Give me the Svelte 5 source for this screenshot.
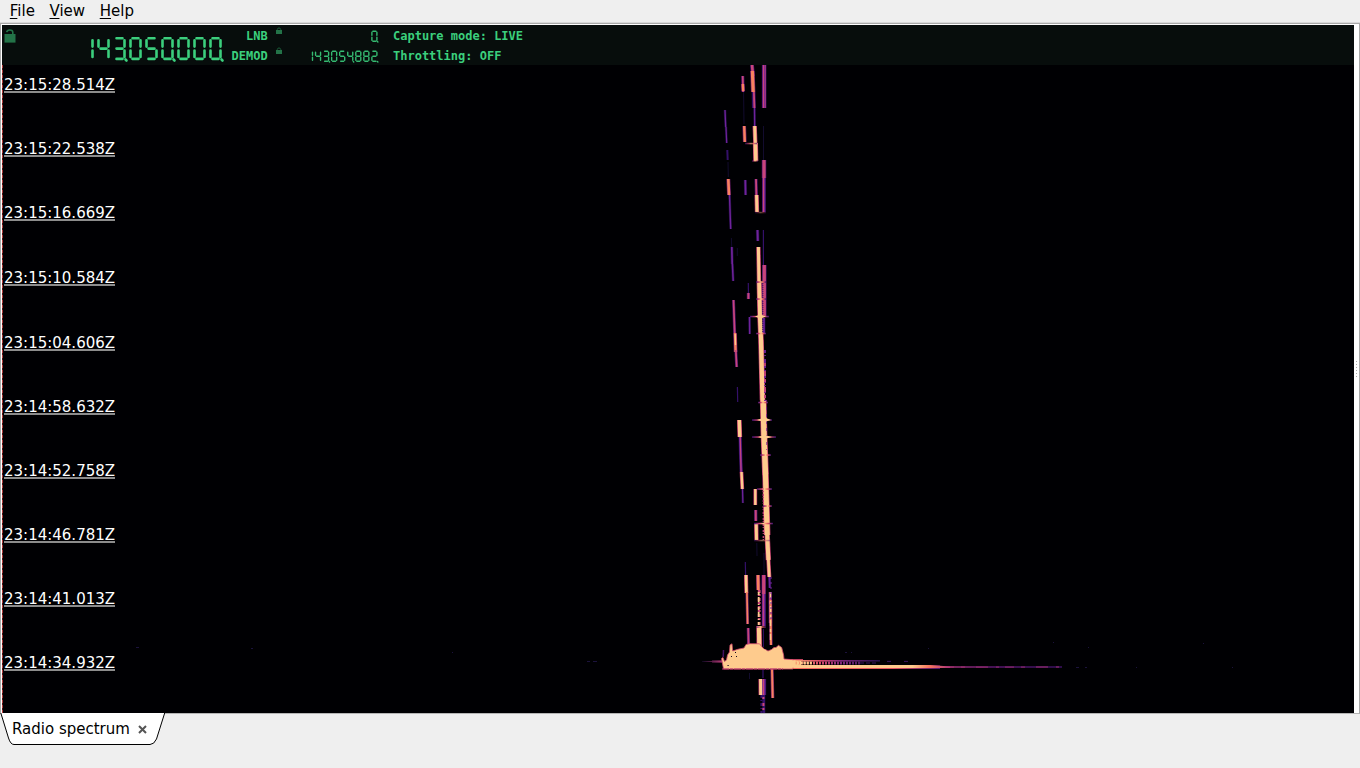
<script>
  const menus = ['File', 'View', 'Help'];

  // label and distance to the next one
  const timestamps = [
    ['23:15:28.514Z', 64],
    ['23:15:22.538Z', 64],
    ['23:15:16.669Z', 65],
    ['23:15:10.584Z', 65],
    ['23:15:04.606Z', 64],
    ['23:14:58.632Z', 64],
    ['23:14:52.758Z', 64],
    ['23:14:46.781Z', 64],
    ['23:14:41.013Z', 64],
    ['23:14:34.932Z', 64]
  ];

  // lit segments for each digit
  const segments = {
    0: 'abcdef',
    1: 'bc',
    2: 'abged',
    3: 'abgcd',
    4: 'fgbc',
    5: 'afgcd',
    6: 'afgecd',
    7: 'abc',
    8: 'abcdefg',
    9: 'abcdfg'
  };

  function lcdPath(value, pitch, w, h, gap) {
    let d = '';
    [...value].forEach((digit, i) => {
      const x = i * pitch + 1.5;
      const r = x + w;
      const y = 1.3;
      const m = y + h / 2;
      const b = y + h;
      const lines = {
        a: `M${x + gap} ${y}H${r - gap}`,
        b: `M${r} ${y + gap}V${m - gap}`,
        c: `M${r} ${m + gap}V${b - gap}`,
        d: `M${x + gap} ${b}H${r - gap}`,
        e: `M${x} ${m + gap}V${b - gap}`,
        f: `M${x} ${y + gap}V${m - gap}`,
        g: `M${x + gap} ${m}H${r - gap}`
      };
      for (const s of segments[digit]) d += lines[s];
      // thousands mark
      if ((value.length - 1 - i) % 3 === 0) d += `M${r + gap * 0.5} ${b + gap * 0.3}l${gap * 0.5} ${gap * 0.5}`;
    });
    return d;
  }

  // x1, y1, x2, y2, width, level
  const traces = [
    // leftmost echo
    [725, 110, 725.7, 127, 1.3, 2],
    [726, 127, 726.7, 143, 1.2, 2],
    [727.3, 150, 727.7, 160, 2, 1],
    [728, 162, 728.3, 177, 1, 0],
    [728.3, 179, 729, 195, 2.6, 4],
    [729.5, 195, 730.7, 229, 1.4, 2],
    [731.4, 238, 731.7, 247, 1, 0],
    [731.8, 247, 732.2, 264, 1.7, 2],
    [732.4, 264, 733.2, 281, 1.5, 2],
    [733.5, 300, 734.7, 333, 1.7, 3],
    [735, 333, 735.6, 352, 2.4, 4],
    [735.2, 334, 735.5, 345, 1.2, 5],
    [735.8, 350, 736.7, 367, 1.7, 3],
    [737.4, 387, 737.7, 402, 1.2, 1],
    [739.3, 420, 739.8, 437, 3.4, 5],
    [740, 437, 741.3, 472, 2.2, 2],
    [740.3, 437, 741, 472, 1, 3],
    [741.5, 472, 742.3, 489, 2.4, 5],
    [742.5, 489, 742.9, 503, 1.2, 2],
    [745.3, 562, 745.6, 575, 1.2, 1],
    [746, 575, 746.4, 593, 2.7, 5],
    [746.9, 592, 747.6, 624, 1.7, 4],
    [748.2, 628, 748.6, 645, 1.8, 3],
    // second echo
    [742.7, 76, 743.1, 92, 1.8, 3],
    [742.8, 84, 743.2, 91, 2.4, 4],
    [743.6, 92, 744, 124, 1, 0],
    [744.2, 126, 744.8, 142, 2.4, 4],
    [745.3, 180, 745.6, 195, 1.8, 2],
    [748.3, 283, 748.5, 299, 1.2, 1],
    [748.4, 293, 748.4, 299, 2, 3],
    [749.5, 317, 749.7, 334, 1.4, 2],
    [737.3, 248, 737.3, 256, 1, 0],
    // main carrier
    [752, 65, 753, 76, 2.6, 3],
    [752.4, 71, 753.2, 92, 3.2, 4],
    [753.8, 92, 754.3, 108, 2, 3],
    [752.4, 92, 752.6, 108, 1.3, 1],
    [754.5, 108, 754.7, 126, 1.3, 2],
    [754.7, 126, 755.3, 143, 3, 5],
    [755.4, 143, 755.8, 161, 3.8, 5],
    [756, 179, 756.4, 195, 1.8, 3],
    [756.6, 195, 757, 212, 3, 5],
    [757.5, 230, 757.8, 241, 2, 2],
    [758.4, 247, 759, 283, 3, 5],
    [759.2, 283, 760, 316, 3.9, 5],
    [760, 316, 761, 340, 4.2, 5],
    [761, 340, 762.5, 400, 4.3, 5],
    [763.2, 400, 764, 435, 5.4, 5],
    [764, 435, 765.5, 475, 5.4, 5],
    [765.5, 475, 767.2, 535, 5.2, 5],
    [767.2, 535, 768.4, 560, 4, 5],
    [768.4, 560, 769.3, 577, 2.8, 5],
    [769.4, 577, 769.8, 588, 1.7, 2],
    [770.2, 592, 770.4, 623, 2.2, 3],
    [770.5, 600, 771, 645, 2, 4],
    // fixed line
    [764, 65, 764, 108, 3.2, 2],
    [763.5, 65, 763.5, 108, 1.2, 3],
    [765.3, 65, 765.3, 108, 0.7, 3],
    [763.5, 126, 763.5, 160, 1, 0],
    [764, 160, 764, 178, 3.2, 3],
    [764, 178, 764, 212, 2.8, 2],
    [763.5, 178, 763.5, 212, 1.2, 3],
    [763.4, 230, 763.4, 265, 1.2, 1],
    [764.3, 265, 764.3, 282, 3.2, 3],
    [764.2, 282, 764.2, 316, 3.4, 3],
    [763.8, 318, 763.8, 334, 2, 2],
    // central lower echoes
    [755.3, 489, 755.3, 505, 2.4, 5],
    [755.7, 510, 755.8, 521, 2, 3],
    [756.2, 523, 756.5, 540, 3, 5],
    [756.8, 543, 757, 556, 1, 0],
    [764, 553, 764, 575, 1, 0],
    [758, 575, 758.3, 590, 2.8, 4],
    [763.7, 575, 763.7, 594, 3.2, 3],
    [763.8, 594, 763.8, 626, 3.2, 2],
    [763.3, 594, 763.3, 626, 1.2, 3],
    [759, 626, 759.3, 648, 4.2, 5],
    [763.4, 629, 763.4, 647, 1, 1],
    // below the burst
    [760.8, 679, 760.9, 695, 3.4, 5],
    [764, 679, 764, 695, 3.2, 2],
    [763.5, 679, 763.5, 699, 1.2, 3],
    [763.8, 695, 763.8, 713, 2.8, 1],
    [772, 668, 772.7, 698, 2, 4],
    [763, 670, 763, 678, 1.2, 1],
    [749.5, 673, 749.5, 679, 1, 0]
  ];

  // uneven, noisy edges
  const dotted = [
    [765, 350, 765, 402, 1.8, 2, '3 2 1 3 4 2'],
    [765, 363, 765, 400, 1.8, 3, '3 5 5 3'],
    [762.8, 283, 762.8, 334, 1, 1, '1 1'],
    [763.3, 488, 763.3, 540, 1.3, 3, '2 1 1 2'],
    [759.2, 590, 759.2, 626, 2.8, 3, '3 1 2 2'],
    [758.7, 592, 758.7, 626, 1.8, 5, '3 2 5 2 1 2'],
    [770.5, 592, 770.5, 643, 1.4, 5, '6 3 3 2'],
    [771, 577, 771, 620, 1, 2, '2 3'],
    [761.4, 695, 761.4, 713, 2, 1, '3 2 1 2'],
    [763.4, 697, 763.4, 713, 2, 3, '2 4 3 2'],
    [766.6, 400, 766.6, 450, 0.7, 2, '3 4']
  ];

  // x1, x2, y, brightness of the sideband splashes
  const splashes = [
    [745, 757, 143.5, 0.7],
    [752, 758, 161, 0.6],
    [755, 766, 212.5, 0.4],
    [756, 766, 282, 1],
    [756, 766, 299, 1],
    [750, 769, 316.5, 1],
    [756, 766, 333.5, 1],
    [758, 768, 402.5, 1],
    [752, 772, 420, 1],
    [752, 776, 437, 1],
    [760, 771, 455, 1],
    [757, 772, 489, 1],
    [763, 772, 506, 1],
    [754, 773, 523.5, 1],
    [754, 770, 540.5, 0.5],
    [756, 766, 627, 0.8]
  ];

  const palette = ['#120b2e', '#34106a', '#70229a', '#c9457a', '#f9815f', '#fecb8d'];
  const halo = ['none', 'none', '#1c0c3b', '#47136d', '#6f1e6b', '#c43a70'];
</script>

<div class="window">
  <nav class="menubar">
    {#each menus as menu}
      <span class="menu"><u>{menu[0]}</u>{menu.slice(1)}</span>
    {/each}
  </nav>

  <div class="frame">
    <div class="panel">
      <header class="lcd">
        <div class="lock-main">
          <svg width="12" height="14" viewBox="0 0 12 14">
            <path d="M2.7 3.2C3 .4 8.8 .2 8.8 3.2V6" fill="none" stroke="#237348" stroke-width="1.6" />
            <rect x="0.5" y="5" width="11" height="8.6" fill="#237348" />
          </svg>
        </div>
        <svg class="freq" width="142" height="26" viewBox="0 0 142 26" role="img" aria-label="143.050.000">
          <path d={lcdPath('143050000', 16, 10, 20.6, 2)} />
        </svg>
        <div class="names">
          <span>LNB</span>
          <span>DEMOD</span>
        </div>
        <div class="locks">
          {#each [0, 1] as lock}
            <svg width="6" height="8" viewBox="0 0 6 8">
              <path d="M1.3 4V2.4C1.3 .5 4.7 .5 4.7 2.4V4" fill="none" stroke="#1b5a38" />
              <rect y="3" width="6" height="4" fill="#237348" />
            </svg>
          {/each}
        </div>
        <div class="values">
          <svg class="small" width="75" height="14" viewBox="0 0 75 14" role="img" aria-label="0">
            <path transform="translate(64.4 0)" d={lcdPath('0', 8.05, 5, 10, 1)} />
          </svg>
          <svg class="small" width="75" height="14" viewBox="0 0 75 14" role="img" aria-label="143.054.882">
            <path d={lcdPath('143054882', 8.05, 5, 10, 1)} />
          </svg>
        </div>
        <div class="status">
          <span>Capture mode: LIVE</span>
          <span>Throttling: OFF</span>
        </div>
      </header>

      <div class="waterfall">
        <svg class="spectrum" width="1352" height="648" viewBox="2 65 1352 648">
          <defs>
            <linearGradient id="beam" gradientUnits="userSpaceOnUse" x1="783" x2="1064" y1="0" y2="0">
              <stop offset="0" stop-color="#fecb8d" />
              <stop offset=".46" stop-color="#fecb8d" />
              <stop offset=".52" stop-color="#f8765f" />
              <stop offset=".6" stop-color="#a5327c" />
              <stop offset=".75" stop-color="#5a176f" />
              <stop offset="1" stop-color="#3a1160" />
            </linearGradient>
            <linearGradient id="edge" gradientUnits="userSpaceOnUse" x1="783" x2="940" y1="0" y2="0">
              <stop offset="0" stop-color="#f56b60" />
              <stop offset=".7" stop-color="#e4525f" />
              <stop offset="1" stop-color="#51176d" />
            </linearGradient>
            <linearGradient id="upper" gradientUnits="userSpaceOnUse" x1="783" x2="880" y1="0" y2="0">
              <stop offset="0" stop-color="#fecb8d" />
              <stop offset=".13" stop-color="#fba373" />
              <stop offset=".38" stop-color="#d84968" />
              <stop offset=".6" stop-color="#7d267b" />
              <stop offset="1" stop-color="#240e48" />
            </linearGradient>
            <linearGradient id="tail" gradientUnits="userSpaceOnUse" x1="702" x2="723" y1="0" y2="0">
              <stop offset="0" stop-color="#0d0820" />
              <stop offset="1" stop-color="#b73779" />
            </linearGradient>
            <linearGradient id="splash">
              <stop offset="0" stop-color="#3b0f70" />
              <stop offset=".3" stop-color="#d8456c" />
              <stop offset=".5" stop-color="#fecb8d" />
              <stop offset=".7" stop-color="#ed5d62" />
              <stop offset="1" stop-color="#3b0f70" />
            </linearGradient>
          </defs>

          {#each traces as [x1, y1, x2, y2, width, level]}
            <line {x1} {y1} {x2} {y2} stroke={halo[level]} stroke-width={width + 1.3} />
          {/each}
          {#each traces as [x1, y1, x2, y2, width, level]}
            <line {x1} {y1} {x2} {y2} stroke={palette[level]} stroke-width={width} />
          {/each}
          {#each dotted as [x1, y1, x2, y2, width, level, dash]}
            <line {x1} {y1} {x2} {y2} stroke={palette[level]} stroke-width={width} stroke-dasharray={dash} />
          {/each}
          {#each splashes as [x1, x2, y, opacity]}
            <rect x={x1} y={y - 0.7} width={x2 - x1} height="1.5" fill="url(#splash)" {opacity} />
          {/each}
          <path d="M757 420l6-2h3l5 2-5 1.6h-3zM758 437l5-1.6h3l6 1.6-6 1.6h-3zM755 316.5l4-1.5h3l4 1.5-4 1.5h-3z" fill="#fecb8d" />

          <!-- meteor head echo -->
          <rect x="702" y="661" width="21" height="1" fill="url(#tail)" />
          <rect x="712" y="660" width="10" height="3" fill="url(#tail)" opacity=".6" />
          <path d="M783 659.6h20" stroke="#d64a68" />
          <rect x="783" y="660" width="97" height="1.6" fill="url(#upper)" />
          <rect x="783" y="661" width="18" height="5" fill="#fecb8d" />
          <path d="M795 663H860" stroke="url(#upper)" stroke-width="3" stroke-dasharray="2 1" />
          <path d="M797 663H812" stroke="#fecb8d" stroke-width="2.4" stroke-dasharray="2 1.2" />
          <path d="M860 663H878M887 661.4h5M904 661.4h6" stroke="#3a1460" stroke-dasharray="4 2" />
          <path d="M783 667.2H940" stroke="url(#edge)" stroke-width="3.8" />
          <path d="M783 665H930L950 666.5V668H783Z" fill="url(#beam)" />
          <path d="M925 666.3H1062V667.7H925Z" fill="url(#beam)" />
          <path d="M945 667.1L1062 667" stroke="#b73779" stroke-opacity=".4" stroke-width="1.8" stroke-dasharray="9 7 4 11 12 8 3 6" />
          <path d="M1076 667.5h3M1085 667.5h2M1136 667.5h1M1232 667.5h1M1053 642.5h1M1088 647.5h1M928 648.5h1M136 647.5h3M251 648.5h2M587 661.5h3M593 661.5h4M845 652.5h2M851 652.5h1M452 652.5h1M1203 643.5h1" stroke="#1b123c" />
          <path
            d="M721.5 658.5L723 657.5 724.5 661.5 726.5 660 727.5 655 729.5 652 730 645 732 643.8 732.7 651 737 649.5 739 649 744 648 746 644.5 750 643.7 759.5 643.8 763 648 768 651 771.5 649.5 774 647.5 776 647.5 778.5 645.3 781.7 647.5 783.6 655 784 659 793 659.7 793 669 723.5 669Z"
            fill="#fecb8d"
            stroke="#d14a6b"
            stroke-width=".8"
          />
          <rect x="782.5" y="660.3" width="13" height="7.4" fill="#fecb8d" />
          <path d="M722 669H783" stroke="#bd3b70" stroke-dasharray="7 1 3 1" />
          <path d="M723.5 650l-.3 7" stroke="#411160" stroke-width="1.5" />
          <path d="M731 656.5h1M736 656.5h1M735 652.5h1M727.5 665.5h1.2M764 648.5h1" stroke="#12071f" />
        </svg>

        <div class="cursor"></div>
        <div class="times">
          {#each timestamps as [time, step]}
            <div class="row" style="height: {step}px"><span>{time}</span></div>
          {/each}
        </div>
      </div>
    </div>

    <div class="splitter">
      {#each Array(6) as _}
        <i></i>
      {/each}
    </div>
  </div>

  <footer class="tabs">
    <div class="tab">
      <svg class="tab-shape" width="166" height="32" viewBox="0 0 166 32">
        <path d="M.5 -1L8.5 25Q10.5 31.5 14 31.5H150Q154 31.5 156.5 26L165 -1" fill="#fff" stroke="#000" />
      </svg>
      <span>Radio spectrum</span>
      <svg class="close" width="9" height="9" viewBox="0 0 9 9">
        <path d="M1 1L8 8M8 1L1 8" stroke="#555" stroke-width="2" />
      </svg>
    </div>
  </footer>
</div>

<style>
  :global(body) {
    background: #efefef;
    overflow: hidden;
  }

  .window {
    display: flex;
    flex-direction: column;
    width: 1360px;
    height: 768px;
    background: #efefef;
    color: #000;
    font-family: 'DejaVu Sans', sans-serif;
    font-size: 15px;
  }

  .menubar {
    display: flex;
    gap: 14.6px;
    height: 22px;
    padding-left: 9.8px;
    line-height: 22px;
    border-bottom: 1px solid #d9d9d9;
  }

  .menu u {
    text-underline-offset: 2px;
    text-decoration-thickness: 1px;
  }

  .frame {
    display: flex;
    box-sizing: border-box;
    height: 691px;
    border: 1px solid #a9a9a9;
    border-bottom-color: #b5b5b5;
    background: #fff;
  }

  .panel {
    width: 1352px;
    margin: 1px 0 0 1px;
  }

  .lcd {
    display: flex;
    height: 40px;
    background: #070d0c;
    color: #3bcf7d;
    font: bold 12px 'DejaVu Sans Mono', monospace;
  }

  .lock-main {
    width: 80px;
    padding: 4px 0 0 2px;
  }

  .freq {
    width: 142px;
    padding-top: 12px;
    flex: none;
    overflow: visible;
    fill: none;
    stroke: #3bcf7d;
    stroke-width: 2.6;
    stroke-linecap: round;
    margin-left: -3px;
  }

  .names,
  .status {
    display: flex;
    flex-direction: column;
    line-height: 20px;
    padding-top: 1px;
  }

  .names {
    width: 44.7px;
    text-align: right;
  }

  .locks {
    display: flex;
    flex-direction: column;
    gap: 12px;
    padding: 2px 0 0 8px;
    width: 30.3px;
  }

  .values {
    display: flex;
    flex-direction: column;
    gap: 6px;
    width: 87px;
    padding-top: 5px;
  }

  .small {
    overflow: visible;
    fill: none;
    stroke: #35ba71;
    stroke-width: 1.4;
    stroke-linecap: round;
  }

  .waterfall {
    position: relative;
    height: 648px;
    background: #000003;
    overflow: hidden;
  }

  .spectrum {
    display: block;
  }

  .cursor {
    position: absolute;
    inset: 0 auto 0 0;
    width: 1px;
    background: repeating-linear-gradient(#b13b3b 0 3px, #421515 3px 5px);
  }

  .times {
    position: absolute;
    top: 8px;
    left: 2px;
    color: #fff;
  }

  .row span {
    display: block;
    height: 18px;
    line-height: 25px;
    border-bottom: 2px solid #8c8c8c;
  }

  .splitter {
    display: flex;
    flex-direction: column;
    justify-content: center;
    align-items: center;
    gap: 2px;
    width: 5px;
  }

  .splitter i {
    width: 1px;
    height: 1px;
    background: #aaa;
  }

  .tabs {
    height: 54px;
    margin-top: -1px;
  }

  .tab {
    position: relative;
    display: flex;
    align-items: center;
    gap: 8.5px;
    width: 166px;
    height: 32px;
    padding-left: 12px;
    box-sizing: border-box;
  }

  .tab-shape {
    position: absolute;
    inset: 0;
  }

  .tab span,
  .close {
    position: relative;
  }
</style>
